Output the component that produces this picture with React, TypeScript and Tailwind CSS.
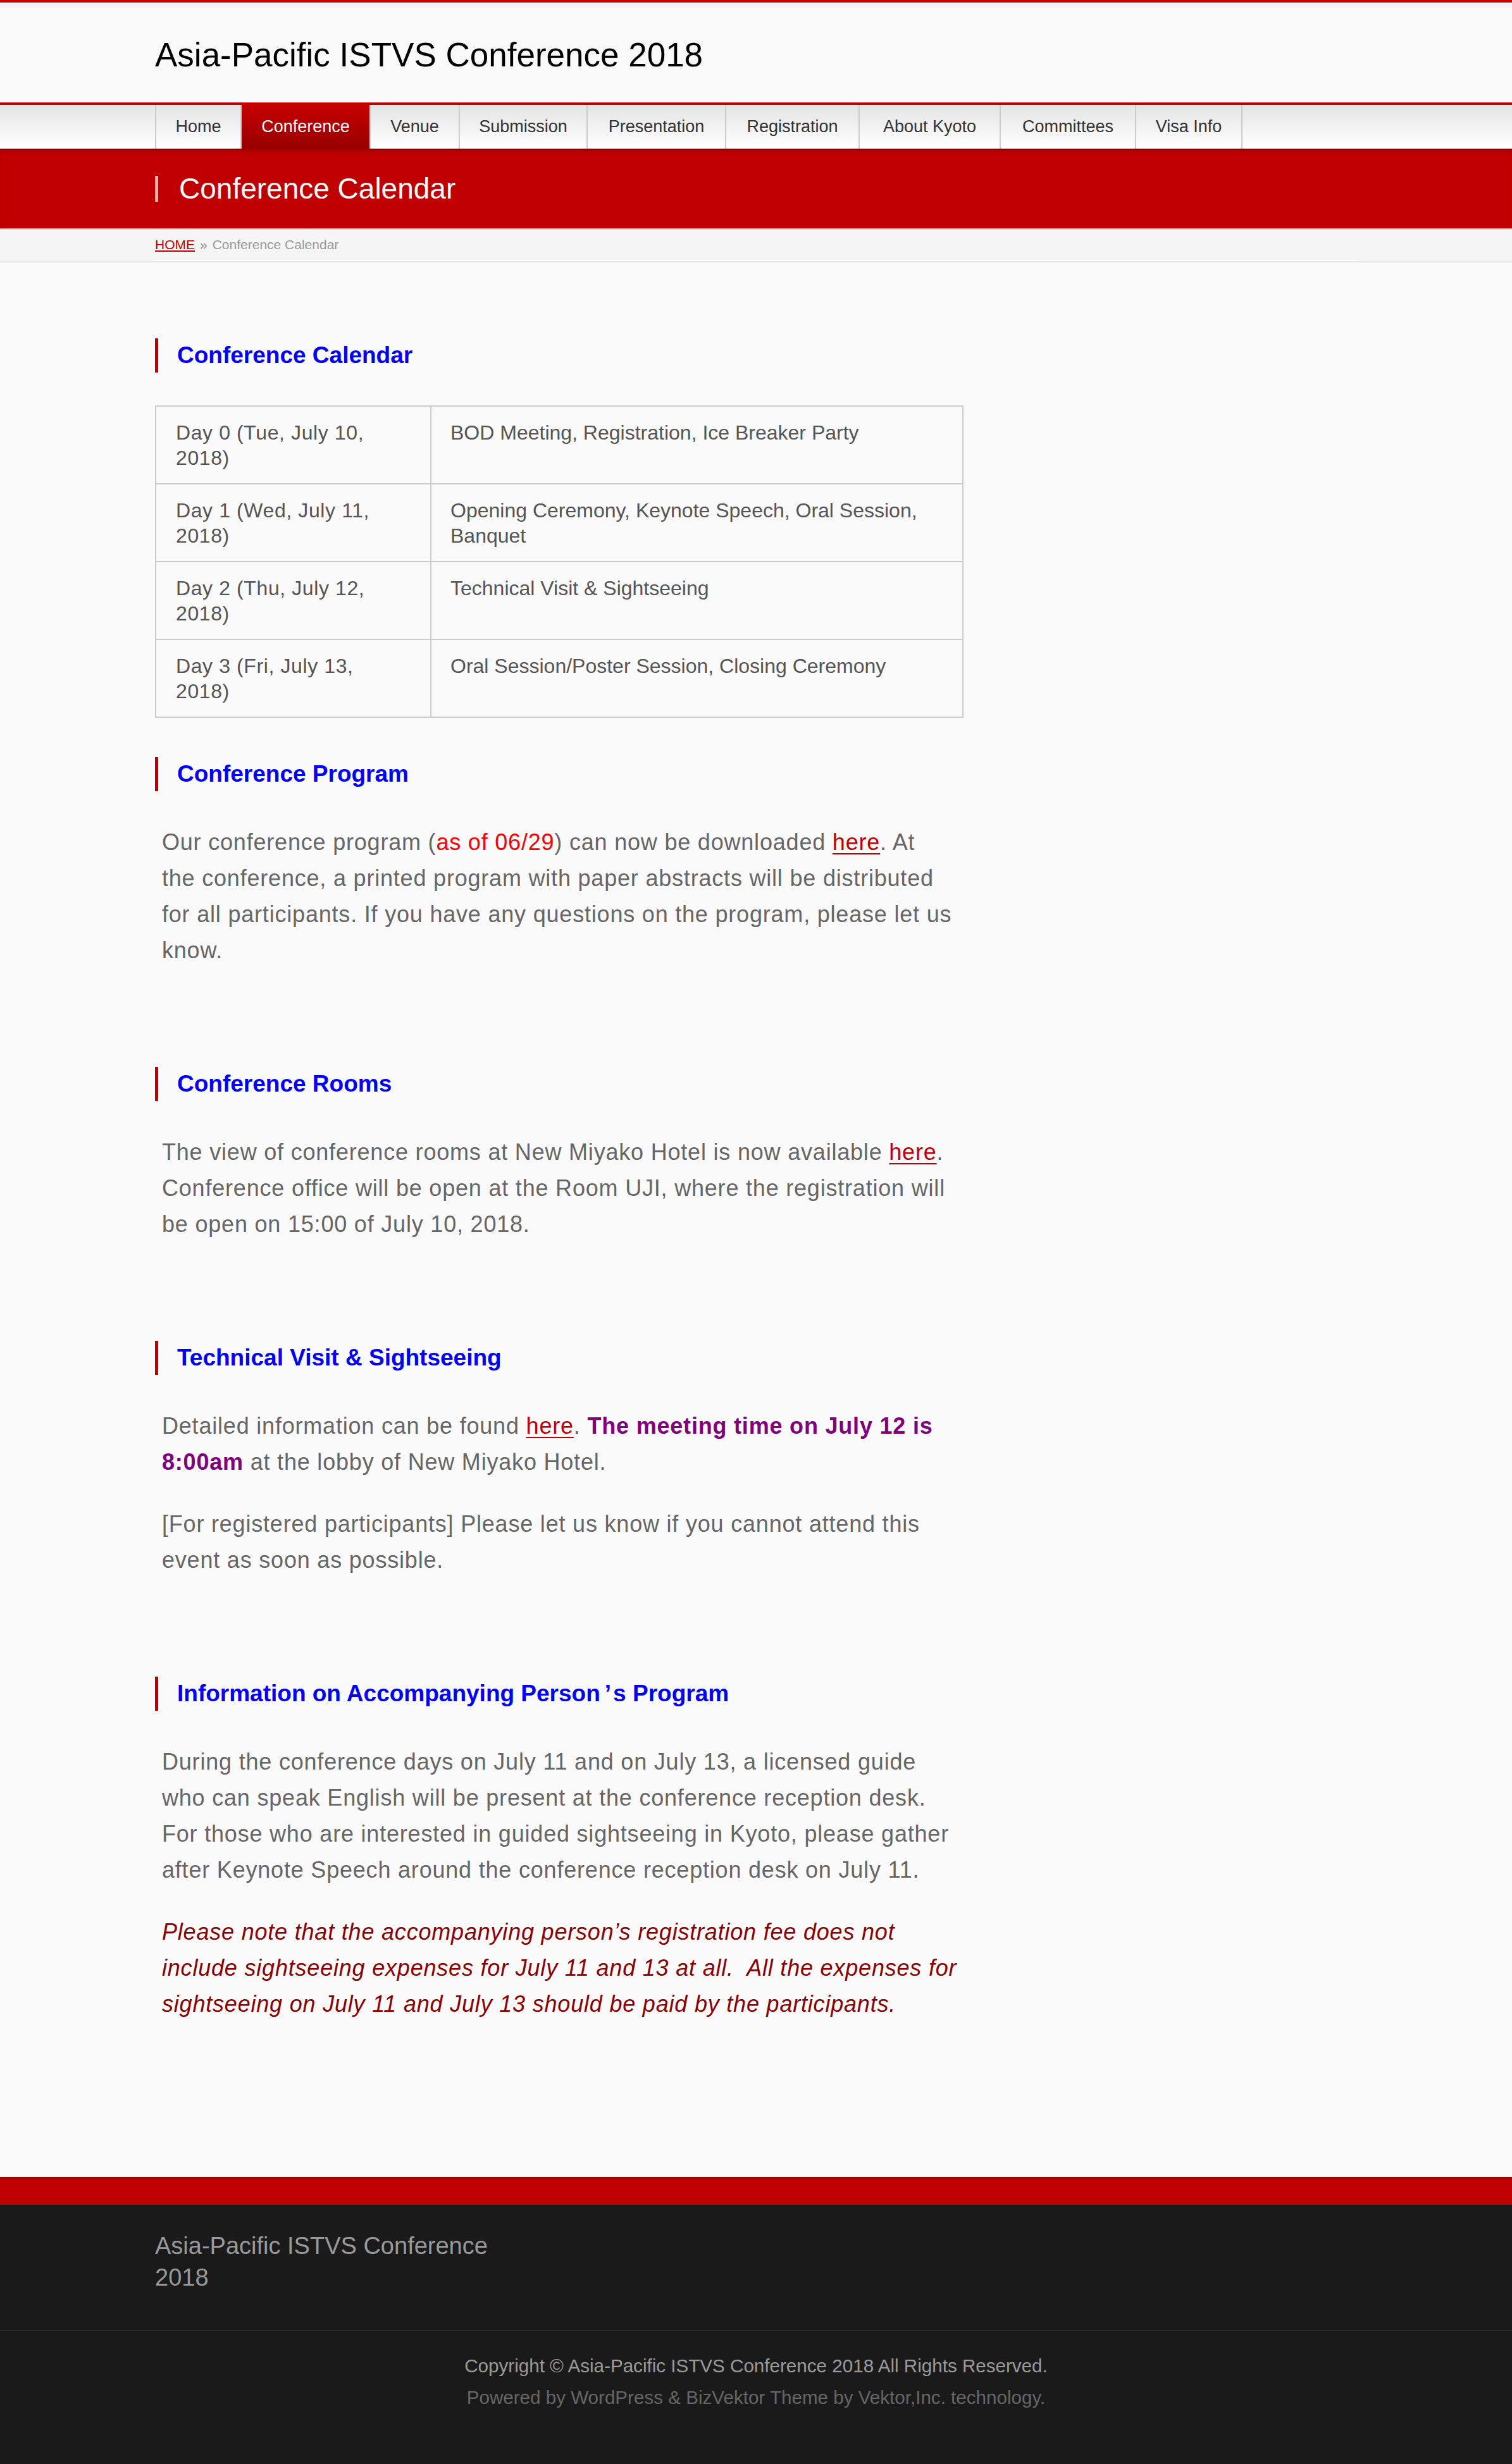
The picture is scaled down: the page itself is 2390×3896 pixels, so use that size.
import { Fragment } from 'react';
import type { ReactNode } from 'react';

const navItems = [
  { label: 'Home', width: 'w-[135px]' },
  { label: 'Conference', width: 'w-[204px]' },
  { label: 'Venue', width: 'w-[141px]' },
  { label: 'Submission', width: 'w-[202px]' },
  { label: 'Presentation', width: 'w-[219px]' },
  { label: 'Registration', width: 'w-[211px]' },
  { label: 'About Kyoto', width: 'w-[223px]' },
  { label: 'Committees', width: 'w-[214px]' },
  { label: 'Visa Info', width: 'w-[170px]' },
];

const calendar = [
  ['Day 0 (Tue, July 10, 2018)', 'BOD Meeting, Registration, Ice Breaker Party'],
  ['Day 1 (Wed, July 11, 2018)', 'Opening Ceremony, Keynote Speech, Oral Session, Banquet'],
  ['Day 2 (Thu, July 12, 2018)', 'Technical Visit & Sightseeing'],
  ['Day 3 (Fri, July 13, 2018)', 'Oral Session/Poster Session, Closing Ceremony'],
];

function Heading({ children, first }: { children: ReactNode; first?: boolean }) {
  return (
    <h2
      className={`${first ? '' : 'mt-[58px]'} mb-[52px] border-l-[5px] border-[#c00000] pl-[30px] text-[37px] font-bold leading-[54px] text-[#0000ff]`}
    >
      {children}
    </h2>
  );
}

// lines follow the wrap points of the original page
function Para({ lines = [], className = '' }: { lines?: ReactNode[]; className?: string }) {
  return (
    <p className={`mb-[41px] min-h-[57px] pl-[11px] text-[36px] leading-[57px] tracking-[0.8px] ${className}`}>
      {lines.map((line, i) => (
        <Fragment key={i}>
          {i > 0 && <br />}
          {line}
        </Fragment>
      ))}
    </p>
  );
}

function Here() {
  return (
    <a href="#" className="text-[#c00000] underline decoration-2 underline-offset-[5px]">
      here
    </a>
  );
}

export default function App() {
  return (
    <div className="min-h-screen bg-[#fafafa] font-['Liberation_Sans',Arial,sans-serif] text-[#666]">
      {/* Header */}
      <header className="border-t-4 border-[#c40000] bg-[#f9f9f9]">
        <div className="h-[8px] bg-[#f2f2f2]" />
        <div className="mx-auto w-[1900px] pb-[45px] pt-[45px]">
          <h1 className="text-[53px] leading-[60px] text-black">Asia-Pacific ISTVS Conference 2018</h1>
        </div>
      </header>

      {/* Global nav */}
      <nav className="border-t-4 border-[#c00000] bg-linear-to-b from-[#e4e4e4] to-white">
        <ul className="mx-auto flex h-[69px] w-[1900px]">
          {navItems.map((item, i) => (
            <li
              key={item.label}
              className={`flex items-center justify-center border-l-2 border-[#cccccc] text-[27px] ${item.width} ${
                i === navItems.length - 1 ? 'border-r-2' : ''
              } ${item.label === 'Conference' ? 'bg-linear-to-b from-[#c80000] to-[#980000] text-white' : 'text-[#333]'}`}
            >
              {item.label}
            </li>
          ))}
        </ul>
      </nav>

      {/* Page title */}
      <div className="h-[126px] bg-[#c00000] shadow-[inset_0_6px_6px_-4px_rgba(0,0,0,0.3)]">
        <div className="mx-auto flex h-full w-[1900px] items-center">
          <h1 className="border-l-[5px] border-[#eab3b3] pl-[33px] text-[46px] leading-[41px] text-white">
            Conference Calendar
          </h1>
        </div>
      </div>

      {/* Breadcrumb */}
      <div className="border-b-2 border-t-2 border-b-[#e5e5e5] border-t-[#cccccc] bg-[#f5f5f5]">
        <div className="mx-auto flex h-[50px] w-[1900px] items-center border-b-2 border-white text-[21px] text-[#999]">
          <a href="#" className="text-[#c00000] underline">
            HOME
          </a>
          <span className="mx-[8px] text-[#888]">»</span>
          <span>Conference Calendar</span>
        </div>
      </div>

      {/* Content */}
      <main className="mx-auto w-[1900px] pb-[106px] pt-[120px]">
        <div className="w-[1278px]">
          <Heading first>Conference Calendar</Heading>
          <table className="mb-[62px] w-full border-collapse border-2 border-[#cccccc] text-[32px] leading-[40px] text-[#555]">
            <tbody>
              {calendar.map(([day, events]) => (
                <tr key={day}>
                  <td className="w-[435px] border-2 border-[#cccccc] py-[20.5px] pl-[31px] pr-[40px] align-top tracking-[0.6px]">
                    {day}
                  </td>
                  <td className="border-2 border-[#cccccc] px-[30px] py-[20.5px] align-top">{events}</td>
                </tr>
              ))}
            </tbody>
          </table>

          <Heading>Conference Program</Heading>
          <Para
            lines={[
              <>
                Our conference program (<span className="text-[#ff0000]">as of 06/29</span>) can now be downloaded <Here />. At
              </>,
              'the conference, a printed program with paper abstracts will be distributed',
              'for all participants. If you have any questions on the program, please let us',
              'know.',
            ]}
          />
          <Para />

          <Heading>Conference Rooms</Heading>
          <Para
            lines={[
              <>
                The view of conference rooms at New Miyako Hotel is now available <Here />.
              </>,
              'Conference office will be open at the Room UJI, where the registration will',
              'be open on 15:00 of July 10, 2018.',
            ]}
          />
          <Para />

          <Heading>Technical Visit &amp; Sightseeing</Heading>
          <Para
            lines={[
              <>
                Detailed information can be found <Here />.{' '}
                <strong className="font-bold text-[#800080]">The meeting time on July 12 is</strong>
              </>,
              <>
                <strong className="font-bold text-[#800080]">8:00am</strong> at the lobby of New Miyako Hotel.
              </>,
            ]}
          />
          <Para
            lines={[
              '[For registered participants] Please let us know if you cannot attend this',
              'event as soon as possible.',
            ]}
          />
          <Para />

          <Heading>
            Information on Accompanying Person
            <span className="ml-[7px] mr-[3px]">’</span>s Program
          </Heading>
          <Para
            lines={[
              'During the conference days on July 11 and on July 13, a licensed guide',
              'who can speak English will be present at the conference reception desk.',
              'For those who are interested in guided sightseeing in Kyoto, please gather',
              'after Keynote Speech around the conference reception desk on July 11.',
            ]}
          />
          <Para
            className="italic text-[#8b0000]"
            lines={[
              'Please note that the accompanying person’s registration fee does not',
              'include sightseeing expenses for July 11 and 13 at all.\u00a0 All the expenses for',
              'sightseeing on July 11 and July 13 should be paid by the participants.',
            ]}
          />
          <Para />
        </div>
      </main>

      {/* Footer */}
      <footer>
        <div className="h-[44px] border-t-4 border-[#990000] bg-[#c00000]" />
        <div className="bg-[#1a1a1a]">
          <div className="mx-auto w-[1900px] pb-[58px] pt-[40px]">
            <p className="w-[560px] text-[38px] leading-[50px] text-[#999]">Asia-Pacific ISTVS Conference 2018</p>
          </div>
          <div className="border-t-2 border-[#2b2b2b] pb-[81px] pt-[30px] text-center text-[29.6px] leading-[50px]">
            <p className="text-[#9a9a9a]">Copyright © Asia-Pacific ISTVS Conference 2018 All Rights Reserved.</p>
            <p className="text-[#666]">Powered by WordPress &amp; BizVektor Theme by Vektor,Inc. technology.</p>
          </div>
        </div>
      </footer>
    </div>
  );
}
